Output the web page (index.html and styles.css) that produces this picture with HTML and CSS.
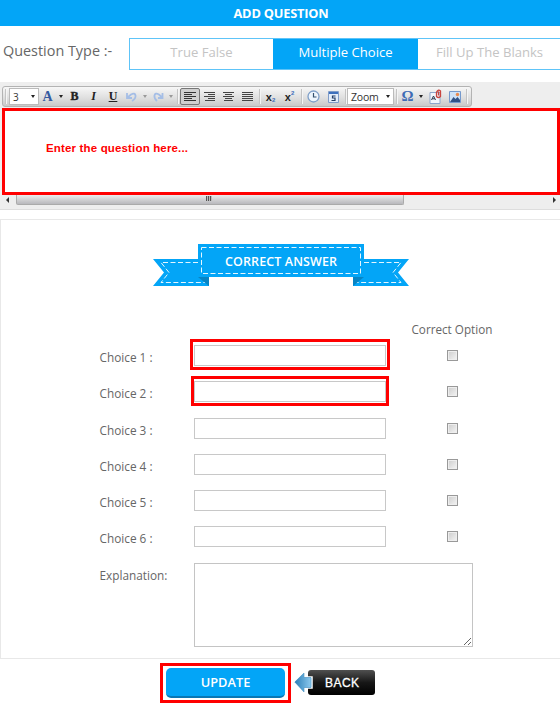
FILE: index.html
```html
<!DOCTYPE html>
<html lang="en">
<head>
<meta charset="utf-8">
<title>Add Question</title>
<link rel="stylesheet" href="styles.css">
</head>
<body>
<header class="title">ADD QUESTION</header>
<nav class="types">
  <span class="types-label">Question Type :-</span>
  <div class="tabs">
    <span class="tab">True False</span>
    <span class="tab active">Multiple Choice</span>
    <span class="tab">Fill Up The Blanks</span>
  </div>
</nav>
<section class="editor">
  <div class="toolbar">
    <i class="sep w6"></i>
    <span class="select size"><b>3</b><i class="arrow"></i></span>
    <span class="tool w17 blue">A</span><span class="tool w9"><i class="arrow"></i></span>
    <span class="tool w19 bold">B</span>
    <span class="tool w19 italic">I</span>
    <span class="tool w20 under">U</span>
    <span class="tool w17"><svg width="11" height="10" viewBox="0 0 11 10"><path d="M1 1v5h5M1.5 5.500L5 2.500Q9 .5 9.500 3.500Q10 6.500 6 9" fill="none" stroke="#a5bee6" stroke-width="1.800"/></svg></span>
    <span class="tool w9"><i class="arrow dim"></i></span>
    <span class="tool w18"><svg width="11" height="10" viewBox="0 0 11 10"><path d="M9.500 1v5H5M9 5.500L6 2.500Q2 .5 1.500 3.500Q1 6.500 4 9" fill="none" stroke="#a5bee6" stroke-width="1.800"/></svg></span>
    <span class="tool w8"><i class="arrow dim"></i></span>
    <i class="sep w5"></i>
    <span class="tool w20 pressed"><svg width="12" height="10" viewBox="0 0 12 10"><path d="M0 .5h12M0 2.500h8M0 4.500h12M0 6.500h8M0 8.500h12" stroke="#333"/></svg></span>
    <span class="tool w19"><svg width="11" height="9" viewBox="0 0 11 9"><path d="M0 .5h11M4 2.500h7M0 4.500h11M4 6.500h7M1 8.500h10" stroke="#444"/></svg></span>
    <span class="tool w19"><svg width="11" height="9" viewBox="0 0 11 9"><path d="M0 .5h11M2 2.500h7M0 4.500h11M2 6.500h7M1 8.500h9" stroke="#444"/></svg></span>
    <span class="tool w19"><svg width="11" height="9" viewBox="0 0 11 9"><path d="M0 .5h11M0 2.500h11M0 4.500h11M0 6.500h11M0 8.500h11" stroke="#444"/></svg></span>
    <i class="sep w4"></i>
    <span class="tool w19 script">x<sub>2</sub></span>
    <span class="tool w19 script">x<sup>2</sup></span>
    <i class="sep w5"></i>
    <span class="tool w19"><svg width="13" height="13" viewBox="0 0 13 13"><circle cx="6.500" cy="6.500" r="5.500" fill="#eef5fd" stroke="#7f9fc8" stroke-width="1.300"/><path d="M6.500 3v4h3" fill="none" stroke="#34506f" stroke-width="1.200"/></svg></span>
    <span class="tool w20"><svg width="11" height="12" viewBox="0 0 11 12"><path d="M.5.5h10v11H.5z" fill="#e3edfa" stroke="#7f9cc8"/><path d="M1 1h9v2H1z" fill="#3d70bd"/><path d="M7.500 5H4.500v2h2.500v2.500H3.500" fill="none" stroke="#253f66" stroke-width="1.200"/></svg></span>
    <i class="sep w4"></i>
    <span class="select zoom"><span>Zoom</span><i class="arrow"></i></span>
    <i class="sep w5"></i>
    <span class="tool w17 omega">Ω</span><span class="tool w9"><i class="arrow"></i></span>
    <span class="tool w20"><svg width="13" height="15" viewBox="0 0 13 15"><path d="M1 3.500h10v11H1z" fill="#f2f6fc" stroke="#8ca5cb"/><path d="M2.500 11L4.500 7l2 4M3.300 9.800h2.400" fill="none" stroke="#27364d"/><path d="M7.500 3v4.500q1.800 2 4 0V2q-2-2-4 1M9.500 2.500v4" fill="none" stroke="#c9453f" stroke-width="1.300"/></svg></span>
    <span class="tool w19"><svg width="12" height="12" viewBox="0 0 12 12"><path d="M.5.500h11v11H.5z" fill="#cfe2f8" stroke="#7599cc"/><path d="M1 11l3.500-5 2 2L8.500 6 11 9v2z" fill="#2f5288"/><circle cx="8.500" cy="3.500" r="1.700" fill="#e98a4f"/></svg></span>
    <i class="sep w5"></i>
  </div>
  <div class="question">Enter the question here...</div>
  <div class="scroll">
    <i class="scroll-left"></i>
    <span class="thumb"><i></i><i></i><i></i></span>
    <i class="scroll-right"></i>
  </div>
</section>
<main class="panel">
  <svg class="ribbon" width="256" height="43" viewBox="0 0 256 43">
    <path d="M0 15h56v27H0l11-13.500zM256 15h-56v27h56l-11-13.500z" fill="#03a5f7"/>
    <path d="M45 18.500H8l8 10-8 10h48M211 18.500h37l-8 10 8 10h-48" fill="none" stroke="#e5f6ff" stroke-dasharray="5 2.500"/>
    <path d="M45 33h11v9zM211 33h-11v9z" fill="#0784c4"/>
    <path d="M45 0h166v33H45z" fill="#03a5f7"/>
    <path d="M48.500 3.500h159v26h-159z" fill="none" stroke="#e5f6ff" stroke-dasharray="5 2.500"/>
    <text x="128" y="21.500" text-anchor="middle" textLength="112">CORRECT ANSWER</text>
  </svg>
  <div class="form">
    <span></span><span></span><span class="option-head">Correct Option</span>
    <label for="c1">Choice 1 :</label><span class="field mark first"><input id="c1"></span><i class="check"></i>
    <label for="c2">Choice 2 :</label><span class="field mark second"><input id="c2"></span><i class="check"></i>
    <label for="c3">Choice 3 :</label><span class="field"><input id="c3"></span><i class="check"></i>
    <label for="c4">Choice 4 :</label><span class="field"><input id="c4"></span><i class="check"></i>
    <label for="c5">Choice 5 :</label><span class="field"><input id="c5"></span><i class="check"></i>
    <label for="c6">Choice 6 :</label><span class="field"><input id="c6"></span><i class="check"></i>
    <label for="ex">Explanation:</label><textarea id="ex"></textarea>
  </div>
</main>
<footer class="actions">
  <span class="update-mark"><button class="update">UPDATE</button></span>
  <svg class="back" width="82" height="27" viewBox="0 0 82 27">
    <defs>
      <linearGradient id="k" x2="0" y2="1"><stop stop-color="#505050"/><stop offset=".5" stop-color="#171717"/><stop offset="1" stop-color="#000"/></linearGradient>
      <linearGradient id="a" x2="1" y2="0"><stop stop-color="#2b7fb8"/><stop offset="1" stop-color="#8cc9ee"/></linearGradient>
    </defs>
    <rect x="14" y="1" width="67" height="25" rx="3" fill="url(#k)"/>
    <path d="M0 13L10 3.500V8h8v11h-8v4.500z" fill="url(#a)" stroke="#fff" stroke-width="1.500"/>
    <path d="M.8 13L10 4v4.500h7v10h-7V23z" fill="url(#a)" stroke="#4a94c4" stroke-width=".6"/>
    <text x="31" y="17.500" textLength="34">BACK</text>
  </svg>
</footer>
</body>
</html>
```
FILE: styles.css
```css
*, *::after { box-sizing: border-box; }
body { margin: 0; width: 560px; height: 706px; overflow: hidden; background: #fff; color: #666; font-family: "Open Sans", sans-serif; }
.title { height: 26px; background: #03a5f7; color: #fff; font-size: 12.8px; font-weight: 700; letter-spacing: -.2px; line-height: 26px; text-align: center; padding-left: 2px; }
.types { display: flex; height: 56px; padding: 12px 0 0 3px; }
.types-label { flex: none; width: 126px; font-size: 14.4px; line-height: 25px; white-space: nowrap; }
.tabs { display: flex; flex: none; width: 433px; height: 32px; border: 1px solid #5ec4f8; }
.tab { width: 143px; flex: none; font-size: 13.1px; line-height: 27px; text-align: center; color: #c4c4c4; }
.tab.active { width: 145px; background: #03a5f7; color: #fff; }
.editor { height: 128px; padding: 4px 0 0 2px; background: #eee; border-bottom: 1px solid #ddd; }
.toolbar { display: flex; width: 470px; height: 21px; border: 1px solid #b3b3b3; border-radius: 3px; background: linear-gradient(#f7f7f7, #dedede 60%, #c9c9c9); }
.toolbar > * { flex: none; }
.w4 { width: 4px; } .w5 { width: 5px; } .w6 { width: 6px; } .w8 { width: 8px; } .w9 { width: 9px; }
.w17 { width: 17px; } .w18 { width: 18px; } .w19 { width: 19px; } .w20 { width: 20px; }
.tool { display: flex; align-items: center; justify-content: center; color: #222; font: bold 12px/19px "Liberation Serif", serif; }
.sep { margin: 2px 0; background: linear-gradient(90deg, #c4c4c4 1px, #f5f5f5 1px, #f5f5f5 2px, transparent 2px) 2px 0 no-repeat; }
.select { display: flex; align-items: center; justify-content: space-between; height: 17px; margin-top: 1px; padding: 0 3px 0 4px; background: #fff; border: 1px solid #bbb; color: #333; font: 10.5px "Open Sans", sans-serif; }
.select b { font-weight: normal; font-size: 10px; }
.size { width: 30px; padding-left: 3px; }
.zoom { width: 47px; padding-left: 3px; letter-spacing: -.2px; }
.arrow { border: 2.500px solid transparent; border-top: 3px solid #222; border-bottom: 0; }
.dim { border-top-color: #999; }
.blue { color: #3459a0; font-size: 14px; }
.bold { -webkit-text-stroke: .4px #222; }
.italic { font-style: italic; }
.under { text-decoration: underline; }
.omega { color: #3e6bb5; font-size: 15px; }
.pressed { margin: 1px 0; border: 1px solid #777; border-radius: 2px; background: #d0d0d0; }
.script { font: bold 11px "Liberation Sans", sans-serif; }
.script sub, .script sup { color: #3d6dbb; font-size: 6px; line-height: 1; }
.script sub { margin-top: 7px; }
.script sup { margin-bottom: 7px; }
.question { height: 87px; margin-top: 1px; padding: 30px 0 0 41px; border: 3px solid #f00; background: #fff; color: #f00; font: bold 11.500px/14px "Liberation Sans", sans-serif; letter-spacing: .16px; }
.scroll { display: flex; align-items: center; height: 10px; padding: 0 4px; }
.scroll-left, .scroll-right { border: 3px solid transparent; }
.scroll-left { border-right-color: #333; border-left: 0; margin-right: 7px; }
.scroll-right { border-left-color: #333; border-right: 0; margin-left: auto; }
.thumb { display: flex; gap: 1px; justify-content: center; width: 388px; height: 10px; padding: 1px 3px 0 0; border: 1px solid #aaa; border-top: 0; background: linear-gradient(#ececec, #b8b8bc); border-radius: 0 0 2px 2px; }
.thumb i { width: 1px; height: 5px; background: #555; box-shadow: 1px 0 #bbb; }
.panel { height: 440px; margin-top: 9px; border: 1px solid #e8e8e8; border-right: 0; padding-top: 24px; }
.ribbon { display: block; margin-left: 152px; }
.ribbon text { fill: #fff; font-size: 12.500px; font-weight: 600; }
.form { display: grid; grid-template-columns: 94.5px 207px 100px; grid-template-rows: 36px repeat(6, 36.300px) 84px; margin: 22px 0 0 98.5px; font-size: 11.800px; }
.form label { line-height: 25px; }
.option-head { padding: 11px 0 0 10.5px; font-size: 11.700px; white-space: nowrap; line-height: 18px; }
.field { position: relative; }
.field input { display: block; width: 192px; height: 21px; padding: 0; border: 1px solid #c8c8c8; }
.mark::after { content: ""; position: absolute; border: 3px solid #f00; }
.first::after { left: -4px; top: -6px; width: 200px; height: 31px; }
.second::after { left: -3px; top: -5px; width: 198px; height: 30px; }
.check { width: 11px; height: 11px; margin: 5px 0 0 45.5px; border: 1px solid #999; background: linear-gradient(135deg, #ccc, #f5f5f5); box-shadow: inset 0 0 0 1px #eee; }
textarea { grid-column: 2 / 4; width: 278.5px; height: 84px; border: 1px solid #c4c4c4; }
.actions { display: flex; padding: 4px 0 0 160px; }
.update-mark { width: 131px; height: 40px; padding: 2px 3px; border: 3px solid #f00; }
.update { display: block; width: 119px; height: 30px; padding: 0; border: 0; border-bottom: 2px solid #0877b5; border-radius: 5px; background: #03a5f7; color: #fff; font: 600 12.800px "Open Sans", sans-serif; }
.back { margin: 6px 0 0 3px; }
.back text { fill: #fff; font: 12px "Liberation Sans", sans-serif; stroke: #fff; stroke-width: .3px; }
```
